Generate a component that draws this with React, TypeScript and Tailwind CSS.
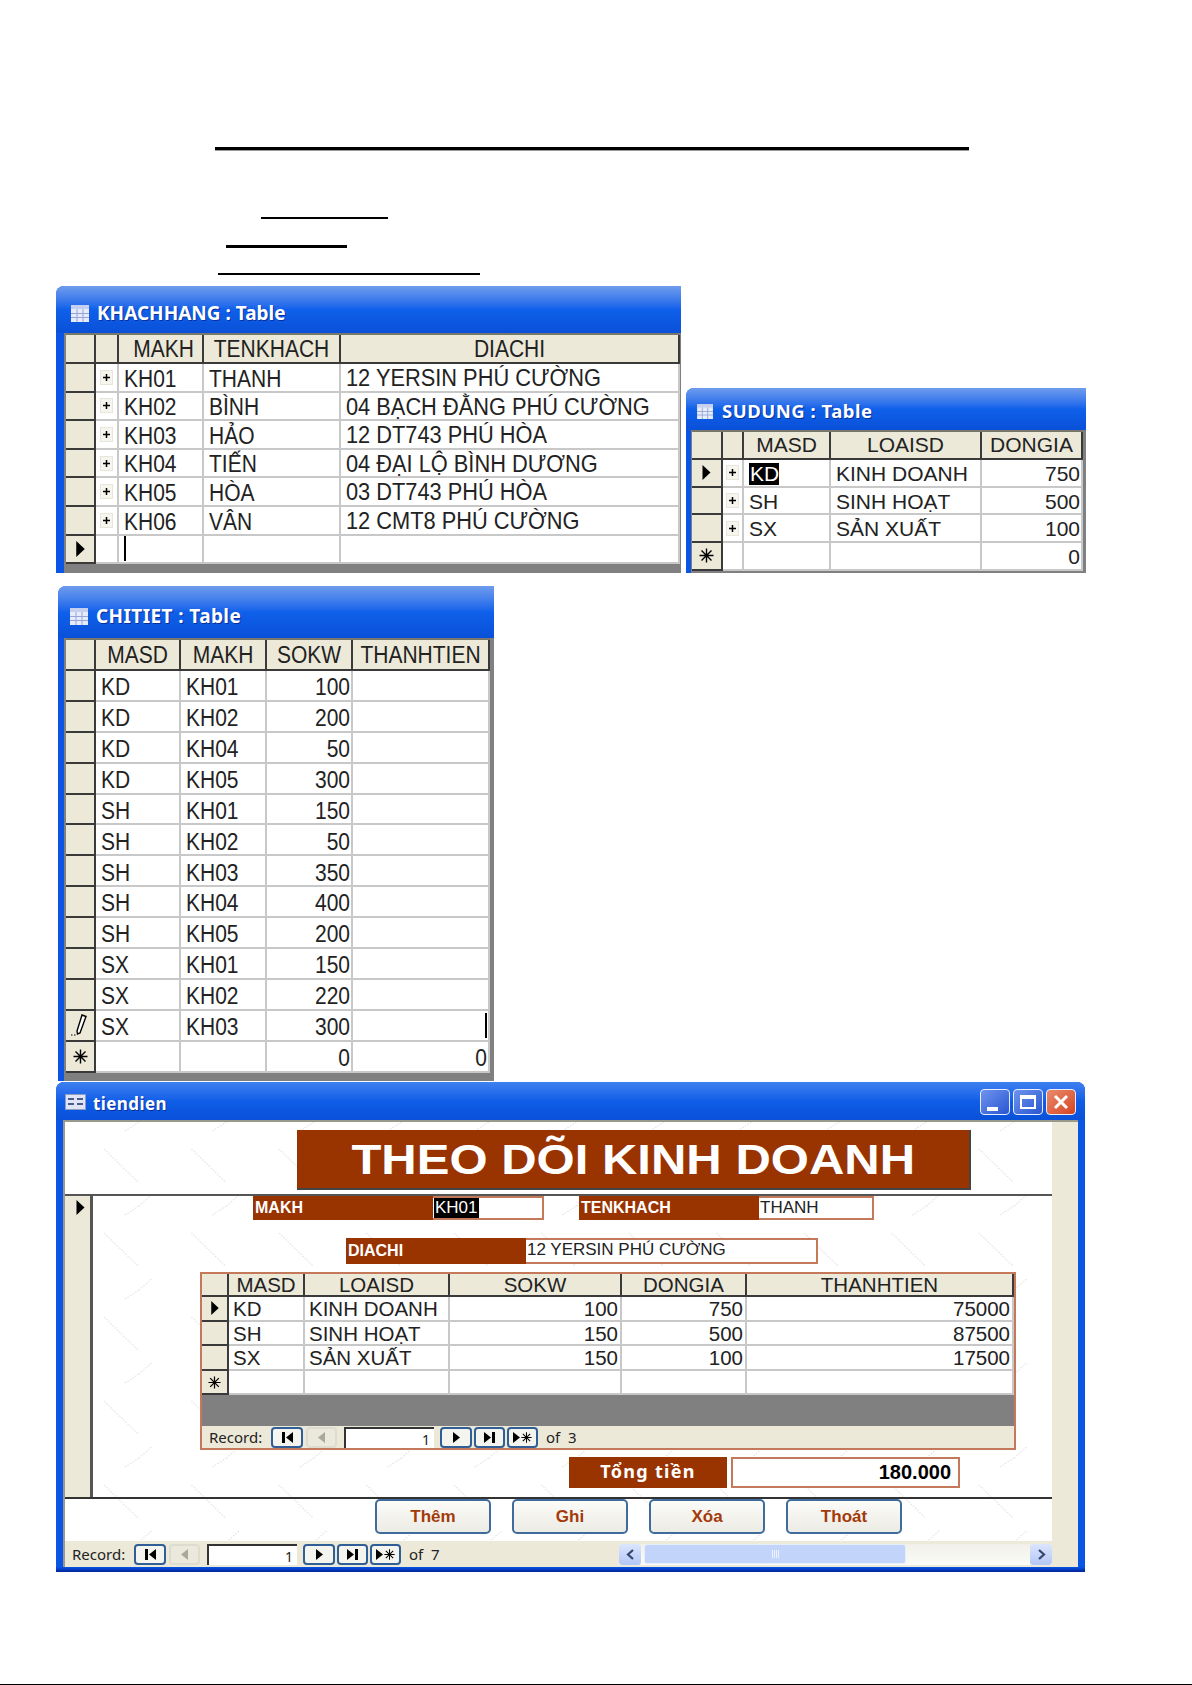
import React from 'react';

const TAHOMA = 'font-["Noto_Sans",sans-serif]';

function Arrow({ className = 'w-[8px] h-[15px]' }: { className?: string }) {
  return (
    <svg viewBox="0 0 8 15" className={className}>
      <path d="M0 0L8 7.5L0 15Z" fill="#000" />
    </svg>
  );
}

function Star({ size = 15 }: { size?: number }) {
  return (
    <svg width={size} height={size} viewBox="0 0 15 15" stroke="#000" strokeWidth="1.4" fill="none">
      <path d="M7.5 0.5V14.5M0.5 7.5H14.5M2.5 2.5L12.5 12.5M12.5 2.5L2.5 12.5" />
    </svg>
  );
}

function Pencil() {
  return (
    <svg width="20" height="24" viewBox="0 0 20 24" fill="none" stroke="#000">
      <path d="M12 2L16 3.5L10 20L7.5 21L7 18Z" strokeWidth="1.4" fill="#fff" />
      <path d="M1 22H2.5M4 22H5.5" strokeWidth="1.2" />
    </svg>
  );
}

function PlusBox() {
  return (
    <div className="w-[13px] h-[15px] bg-[#f6f5ee] border border-[#e8e6da] flex items-center justify-center">
      <svg width="9" height="9" viewBox="0 0 9 9" stroke="#000" strokeWidth="1.5">
        <path d="M4.5 1V8M1 4.5H8" />
      </svg>
    </div>
  );
}

function TableIcon({ className = 'w-[18px] h-[17px]' }: { className?: string }) {
  return (
    <svg viewBox="0 0 18 17" className={className}>
      <rect width="18" height="17" fill="#e6ecfb" />
      <rect width="18" height="4" fill="#c5d0ee" />
      <path d="M0 8.5H18M0 12.5H18M6 4V17M12 4V17" stroke="#96a6d6" strokeWidth="1" />
    </svg>
  );
}

function FormIcon() {
  return (
    <svg viewBox="0 0 21 16" className="w-[21px] h-[16px]">
      <rect width="21" height="16" fill="#dfe5f6" />
      <rect x="0.5" y="0.5" width="20" height="15" fill="none" stroke="#8e9cc8" />
      <path d="M3 5H9M3 10H9M12 5H18M12 10H18" stroke="#4b5a8a" strokeWidth="2" />
    </svg>
  );
}

// the screenshot was stretched upward, so the two tall tables get taller glyphs
const Tall = ({ children }: { children: React.ReactNode }) => (
  <span className="inline-block scale-y-[1.13]">{children}</span>
);

type WinProps = { title: string; icon: React.ReactNode; bar: string; text: string; gap: string; children: React.ReactNode; className: string };

// blue XP frame around every Access window
function Win({ title, icon, bar, text, gap, children, className }: WinProps) {
  return (
    <div className={`flex flex-col rounded-tl-[8px] overflow-hidden bg-[#0a55e4] ${className}`}>
      <div className={`flex items-center shrink-0 bg-gradient-to-b from-[#6f9cec] via-[#0f60ea] to-[#0a50d8] ${bar} ${gap}`}>
        {icon}
        <span className={`${TAHOMA} font-bold text-white [text-shadow:1px_1px_0_#0a2f9a] whitespace-nowrap ${text}`}>{title}</span>
      </div>
      {children}
    </div>
  );
}

const hdr = 'bg-[#ece9d8] border-r-2 border-b-2 border-[#3a3a3a] flex items-center justify-center whitespace-nowrap overflow-hidden';
const sel = 'bg-[#ece9d8] border-r-2 border-b-2 border-[#3a3a3a] flex items-center justify-center';
const cell = 'bg-white border-r-2 border-b-2 border-[#c8c8c8] flex items-center whitespace-nowrap overflow-hidden';

const custRows = [
  ['KH01', 'THANH', '12 YERSIN PHÚ CƯỜNG'],
  ['KH02', 'BÌNH', '04 BẠCH ĐẰNG PHÚ CƯỜNG'],
  ['KH03', 'HẢO', '12 DT743 PHÚ HÒA'],
  ['KH04', 'TIẾN', '04 ĐẠI LỘ BÌNH DƯƠNG'],
  ['KH05', 'HÒA', '03 DT743 PHÚ HÒA'],
  ['KH06', 'VÂN', '12 CMT8 PHÚ CƯỜNG'],
];

const useRows = [
  ['KD', 'KINH DOANH', '750'],
  ['SH', 'SINH HOẠT', '500'],
  ['SX', 'SẢN XUẤT', '100'],
];

const detailRows = [
  ['KD', 'KH01', '100'],
  ['KD', 'KH02', '200'],
  ['KD', 'KH04', '50'],
  ['KD', 'KH05', '300'],
  ['SH', 'KH01', '150'],
  ['SH', 'KH02', '50'],
  ['SH', 'KH03', '350'],
  ['SH', 'KH04', '400'],
  ['SH', 'KH05', '200'],
  ['SX', 'KH01', '150'],
  ['SX', 'KH02', '220'],
  ['SX', 'KH03', '300'],
];

const subRows = [
  ['KD', 'KINH DOANH', '100', '750', '75000'],
  ['SH', 'SINH HOẠT', '150', '500', '87500'],
  ['SX', 'SẢN XUẤT', '150', '100', '17500'],
];

function KhachHang() {
  const grid = 'grid grid-cols-[30px_23px_85px_137px_339px] text-[21px] text-[#222]';
  return (
    <Win
      title="KHACHHANG : Table"
      icon={<TableIcon />}
      bar="h-[47px] pl-[15px] pt-[7px]"
      gap="gap-[8px]"
      text="text-[19px]"
      className="w-[625px] h-[287px]"
    >
      <div className="flex-1 ml-[8px] pl-[2px] pr-[2px] bg-[#808080] flex flex-col">
        <div className={`${grid} h-[31px] border-t-2 border-[#77776a]`}>
          <div className={hdr} />
          <div className={hdr} />
          <div className={`${hdr} pl-[6px]`}><Tall>MAKH</Tall></div>
          <div className={hdr}><Tall>TENKHACH</Tall></div>
          <div className={hdr}><Tall>DIACHI</Tall></div>
        </div>
        {custRows.map((r) => (
          <div key={r[0]} className={`${grid} h-[28.6px]`}>
            <div className={sel} />
            <div className={`${cell} justify-center`}><PlusBox /></div>
            <div className={`${cell} pl-[5px] pt-[2px]`}><Tall>{r[0]}</Tall></div>
            <div className={`${cell} pl-[5px] pt-[2px]`}><Tall>{r[1]}</Tall></div>
            <div className={`${cell} pl-[5px] pt-[2px] text-[21.8px]`}><Tall>{r[2]}</Tall></div>
          </div>
        ))}
        <div className={`${grid} h-[28.6px]`}>
          <div className={sel}><Arrow className="w-[9px] h-[16px]" /></div>
          <div className={cell} />
          <div className={`${cell} pl-[5px]`}><div className="w-[2px] h-[25px] bg-black" /></div>
          <div className={cell} />
          <div className={cell} />
        </div>
      </div>
    </Win>
  );
}

function SuDung() {
  const grid = 'grid grid-cols-[31px_21px_87px_151px_101px] text-[21px] leading-[22px] text-[#222]';
  return (
    <Win
      title="SUDUNG : Table"
      icon={<TableIcon className="w-[18px] h-[15px]" />}
      bar="h-[42px] pl-[10px] pt-[4px]"
      gap="gap-[8px]"
      text="text-[18.5px] tracking-[0.5px]"
      className="w-[400px] h-[185px]"
    >
      <div className="flex-1 ml-[5px] pl-[1px] pr-[3px] bg-[#808080] flex flex-col">
        <div className={`${grid} h-[30px] border-t-2 border-[#77776a]`}>
          <div className={hdr} />
          <div className={hdr} />
          <div className={hdr}>MASD</div>
          <div className={hdr}>LOAISD</div>
          <div className={hdr}>DONGIA</div>
        </div>
        {useRows.map((r, i) => (
          <div key={r[0]} className={`${grid} h-[27.7px]`}>
            <div className={sel}>{i === 0 && <Arrow className="w-[9px] h-[15px]" />}</div>
            <div className={`${cell} justify-center`}><PlusBox /></div>
            <div className={`${cell} pl-[5px] pt-[2px]`}>
              {i === 0 ? <span className="bg-black text-white h-[22px] leading-[22px] pl-[1px]">{r[0]}</span> : r[0]}
            </div>
            <div className={`${cell} pl-[5px] pt-[2px]`}>{r[1]}</div>
            <div className={`${cell} justify-end pr-[1px] pt-[2px]`}>{r[2]}</div>
          </div>
        ))}
        <div className={`${grid} h-[27.7px]`}>
          <div className={sel}><Star /></div>
          <div className={cell} />
          <div className={cell} />
          <div className={cell} />
          <div className={`${cell} justify-end pr-[1px] pt-[2px]`}>0</div>
        </div>
      </div>
    </Win>
  );
}

function ChiTiet() {
  const grid = 'grid grid-cols-[30px_85px_86px_86px_137px] text-[21px] text-[#222]';
  return (
    <Win
      title="CHITIET : Table"
      icon={<TableIcon />}
      bar="h-[52px] pl-[12px] pt-[8px]"
      gap="gap-[8px]"
      text="text-[19px] tracking-[0.4px]"
      className="w-[436px] h-[495px]"
    >
      <div className="flex-1 ml-[6px] pl-[2px] pr-[4px] bg-[#808080] flex flex-col">
        <div className={`${grid} h-[33px] border-t-2 border-[#77776a]`}>
          <div className={hdr} />
          <div className={hdr}><Tall>MASD</Tall></div>
          <div className={hdr}><Tall>MAKH</Tall></div>
          <div className={hdr}><Tall>SOKW</Tall></div>
          <div className={hdr}><Tall>THANHTIEN</Tall></div>
        </div>
        {detailRows.map((r, i) => (
          <div key={i} className={`${grid} h-[30.9px]`}>
            <div className={sel}>{i === 11 && <Pencil />}</div>
            <div className={`${cell} pl-[5px] pt-[3px]`}><Tall>{r[0]}</Tall></div>
            <div className={`${cell} pl-[5px] pt-[3px]`}><Tall>{r[1]}</Tall></div>
            <div className={`${cell} justify-end pr-[1px] pt-[3px]`}><Tall>{r[2]}</Tall></div>
            <div className={`${cell} justify-end pr-[1px]`}>
              {i === 11 && <div className="w-[2px] h-[25px] bg-black" />}
            </div>
          </div>
        ))}
        <div className={`${grid} h-[30.9px]`}>
          <div className={sel}><Star /></div>
          <div className={cell} />
          <div className={cell} />
          <div className={`${cell} justify-end pr-[1px] pt-[3px]`}><Tall>0</Tall></div>
          <div className={`${cell} justify-end pr-[1px] pt-[3px]`}><Tall>0</Tall></div>
        </div>
      </div>
    </Win>
  );
}

function NavBtn({ children, off }: { children?: React.ReactNode; off?: boolean }) {
  return (
    <div
      className={`h-full rounded-[4px] border-2 flex items-center justify-center gap-[1px] ${
        off ? 'border-[#dedcd0] bg-[#ebe9dc]' : 'border-[#2f5f96] bg-[#f5f5ef]'
      }`}
    >
      {children}
    </div>
  );
}

function Tri({ left, color = '#000' }: { left?: boolean; color?: string }) {
  return (
    <svg width="7" height="11" viewBox="0 0 7 11">
      <path d={left ? 'M7 0L0 5.5L7 11Z' : 'M0 0L7 5.5L0 11Z'} fill={color} />
    </svg>
  );
}

const Bar = () => <div className="w-[3px] h-[11px] bg-black" />;

function RecordNav({ total }: { total: string }) {
  return (
    <div className={`flex items-center h-full pl-[7px] text-[15px] text-[#222] ${TAHOMA}`}>
      <span className="w-[62px] whitespace-nowrap">Record:</span>
      <div className="w-[32px] h-[21px]"><NavBtn><Bar /><Tri left /></NavBtn></div>
      <div className="w-[31px] h-[21px] ml-[3px]"><NavBtn off><Tri left color="#a8a89c" /></NavBtn></div>
      <div className="w-[90px] h-[21px] ml-[7px] bg-white border-t-2 border-l-2 border-[#333] flex items-end justify-end pr-[4px] text-[14px] leading-[16px]">1</div>
      <div className="w-[32px] h-[21px] ml-[6px]"><NavBtn><Tri /></NavBtn></div>
      <div className="w-[31px] h-[21px] ml-[2px]"><NavBtn><Tri /><Bar /></NavBtn></div>
      <div className="w-[31px] h-[21px] ml-[2px]"><NavBtn><Tri /><Star size={11} /></NavBtn></div>
      <span className="ml-[8px] whitespace-nowrap">of&nbsp;&nbsp;{total}</span>
    </div>
  );
}

function Field({ label, value, selected, className }: { label: string; value: string; selected?: boolean; className: string }) {
  return (
    <div className={`flex ${className}`}>
      <div className="w-[180px] bg-[#993300] text-white font-bold text-[16px] pl-[2px] flex items-center">{label}</div>
      <div className="flex-1 bg-white border-2 border-l-0 border-[#c47a5a] text-[17px] text-[#222] flex items-start whitespace-nowrap pl-[1px]">
        {selected ? <span className="bg-black text-white px-[1px] leading-[20px]">{value}</span> : <span className="leading-[20px]">{value}</span>}
      </div>
    </div>
  );
}

function SubForm() {
  const grid = 'grid grid-cols-[27px_76px_145px_172px_125px_267px] text-[20.5px] leading-[20px] text-[#222]';
  return (
    <div className="ml-[107px] mt-[8px] w-[816px] h-[178px] border-2 border-[#c47a5a] bg-[#808080] flex flex-col">
      <div className={`${grid} h-[23px]`}>
        <div className={hdr} />
        <div className={hdr}>MASD</div>
        <div className={hdr}>LOAISD</div>
        <div className={hdr}>SOKW</div>
        <div className={hdr}>DONGIA</div>
        <div className={`${hdr} border-r-0`}>THANHTIEN</div>
      </div>
      {subRows.map((r, i) => (
        <div key={r[0]} className={`${grid} h-[24.6px]`}>
          <div className={sel}>{i === 0 && <Arrow className="w-[8px] h-[14px]" />}</div>
          <div className={`${cell} pl-[4px] pt-[2px]`}>{r[0]}</div>
          <div className={`${cell} pl-[4px] pt-[2px]`}>{r[1]}</div>
          <div className={`${cell} justify-end pr-[2px] pt-[2px]`}>{r[2]}</div>
          <div className={`${cell} justify-end pr-[2px] pt-[2px]`}>{r[3]}</div>
          <div className={`${cell} justify-end pr-[2px] pt-[2px] border-r-0`}>{r[4]}</div>
        </div>
      ))}
      <div className={`${grid} h-[24.6px]`}>
        <div className={sel}><Star size={13} /></div>
        <div className={cell} />
        <div className={cell} />
        <div className={cell} />
        <div className={cell} />
        <div className={`${cell} border-r-0`} />
      </div>
      <div className="flex-1" />
      <div className="h-[22px] bg-[#ece9d8]"><RecordNav total="3" /></div>
    </div>
  );
}

function ActionBtn({ label }: { label: string }) {
  return (
    <div className="w-[116px] h-[35px] rounded-[5px] border-2 border-[#3f6c9c] bg-gradient-to-b from-[#fbfbf8] to-[#ecebe4] flex items-center justify-center text-[17px] font-bold text-[#a33a0a]">
      {label}
    </div>
  );
}

function ScrollBar() {
  const arrow = 'w-[22px] h-[21px] rounded-[3px] bg-gradient-to-b from-[#dbe5fd] to-[#b4c8f6] flex items-center justify-center';
  return (
    <div className="ml-auto w-[433px] h-[21px] flex items-center bg-gradient-to-b from-[#f1f0e8] to-[#fbfbf8]">
      <div className={arrow}>
        <svg width="9" height="11" viewBox="0 0 9 11" fill="none" stroke="#34466e" strokeWidth="2.2"><path d="M7 1L2 5.5L7 10" /></svg>
      </div>
      <div className="ml-[3px] w-[262px] h-[20px] rounded-[3px] border border-[#e6edfd] bg-[#c3d4fb] flex items-center justify-center gap-[1px]">
        {[0, 1, 2, 3].map((k) => <div key={k} className="w-[1px] h-[8px] bg-[#eef3ff]" />)}
      </div>
      <div className={`${arrow} ml-auto`}>
        <svg width="9" height="11" viewBox="0 0 9 11" fill="none" stroke="#34466e" strokeWidth="2.2"><path d="M2 1L7 5.5L2 10" /></svg>
      </div>
    </div>
  );
}

// faint marble dashes behind the form sections
function Watermark() {
  return (
    <svg className="absolute inset-0 w-full h-full pointer-events-none">
      <defs>
        <pattern id="marble" width="87.5" height="84" patternUnits="userSpaceOnUse">
          <g stroke="#dcdcdc" strokeWidth="1" strokeDasharray="1.5 1.5" fill="none">
            <path d="M39 27L73 60" />
            <path d="M60 9L74 0M74 84L87.5 72" />
          </g>
        </pattern>
      </defs>
      <rect width="100%" height="100%" fill="url(#marble)" />
    </svg>
  );
}

function TitleBtn({ children, close }: { children: React.ReactNode; close?: boolean }) {
  return (
    <div
      className={`w-[30px] h-[26px] rounded-[4px] border border-[#e8eefc] flex items-center justify-center ${
        close ? 'bg-gradient-to-br from-[#e98a6c] to-[#d5421f]' : 'bg-gradient-to-br from-[#6f93ee] to-[#2a55d0]'
      }`}
    >
      {children}
    </div>
  );
}

function TienDien() {
  return (
    <div className="mt-[1px] ml-[56px] w-[1029px] h-[490px] rounded-t-[8px] overflow-hidden bg-[#0a55e4] flex flex-col">
      <div className="h-[38px] shrink-0 flex items-center pl-[9px] pr-[9px] pt-[2px] gap-[7px] bg-gradient-to-b from-[#3f80f0] via-[#0f5ee8] to-[#0a50d8]">
        <FormIcon />
        <span className={`${TAHOMA} font-bold text-[17px] tracking-[0.4px] pt-[3px] text-white [text-shadow:1px_1px_0_#0a2f9a]`}>tiendien</span>
        <div className="ml-auto flex gap-[3px]">
          <TitleBtn>
            <div className="w-[11px] h-[4px] bg-white mt-[13px] mr-[6px]" />
          </TitleBtn>
          <TitleBtn>
            <div className="w-[16px] h-[14px] border-2 border-t-[4px] border-white" />
          </TitleBtn>
          <TitleBtn close>
            <svg width="16" height="16" viewBox="0 0 16 16" stroke="#fff" strokeWidth="3"><path d="M2 2L14 14M14 2L2 14" /></svg>
          </TitleBtn>
        </div>
      </div>
      <div className="ml-[7px] w-[1015px] h-[447px] border-t-2 border-l-2 border-[#9a9a8c] bg-[#ece9d8] flex">
        <div className="w-[987px] h-full flex flex-col relative bg-white">
          <Watermark />
          <div className="relative h-[74px] border-b-2 border-[#555] pl-[232px] pt-[8px]">
            <div className="w-[674px] h-[60px] bg-[#993300] border-r-2 border-b-2 border-[#444] flex items-center justify-center overflow-hidden">
              <span className="inline-block text-[43px] font-bold text-white whitespace-nowrap scale-x-[1.14]">THEO DÕI KINH DOANH</span>
            </div>
          </div>
          <div className="relative h-[301px] flex">
            <div className="w-[28px] bg-[#ece9d8] border-r-[3px] border-[#555] pl-[11px] pt-[4px]">
              <Arrow className="w-[9px] h-[15px]" />
            </div>
            <div className="flex-1 flex flex-col">
              <div className="flex pl-[160px]">
                <Field label="MAKH" value="KH01" selected className="w-[291px] h-[24px]" />
                <Field label="TENKHACH" value="THANH" className="ml-[35px] w-[295px] h-[24px]" />
              </div>
              <div className="pl-[253px] mt-[18px]">
                <Field label="DIACHI" value="12 YERSIN PHÚ CƯỜNG" className="w-[472px] h-[26px]" />
              </div>
              <SubForm />
              <div className="flex ml-[476px] mt-[7px] gap-[4px] h-[31px]">
                <div className={`${TAHOMA} w-[158px] bg-[#993300] text-white font-bold text-[18px] tracking-[1.3px] flex items-center justify-center pb-[3px]`}>Tổng tiền</div>
                <div className="w-[229px] bg-white border-2 border-[#c47a5a] flex items-center justify-end pr-[7px] pb-[2px] text-[20px] font-bold text-black">180.000</div>
              </div>
            </div>
          </div>
          <div className="relative flex-1 border-t-2 border-[#333] flex pl-[310px] gap-[21px]">
            <ActionBtn label="Thêm" />
            <ActionBtn label="Ghi" />
            <ActionBtn label="Xóa" />
            <ActionBtn label="Thoát" />
          </div>
          <div className="relative h-[26px] bg-[#ece9d8] flex items-center">
            <RecordNav total="7" />
            <ScrollBar />
          </div>
        </div>
      </div>
      <div className="flex-1 bg-gradient-to-b from-[#0a55e4] to-[#00209a]" />
    </div>
  );
}

export default function App() {
  return (
    <div className='w-[1192px] h-[1685px] bg-white overflow-hidden flex flex-col font-["Liberation_Sans",Arial,sans-serif]'>
      <div className="ml-[215px] mt-[147px] w-[754px] h-[3px] bg-black" />
      <div className="ml-[215px] w-[754px] h-[1px] bg-[#999]" />
      <div className="ml-[261px] mt-[66px] w-[127px] h-[2px] bg-black" />
      <div className="ml-[226px] mt-[26px] w-[121px] h-[3px] bg-black" />
      <div className="ml-[218px] mt-[25px] w-[262px] h-[2px] bg-black" />
      <div className="flex items-end ml-[56px] mt-[11px] gap-[5px]">
        <KhachHang />
        <SuDung />
      </div>
      <div className="ml-[58px] mt-[13px]">
        <ChiTiet />
      </div>
      <TienDien />
      <div className="mt-[112px] h-[1px] bg-black" />
    </div>
  );
}
